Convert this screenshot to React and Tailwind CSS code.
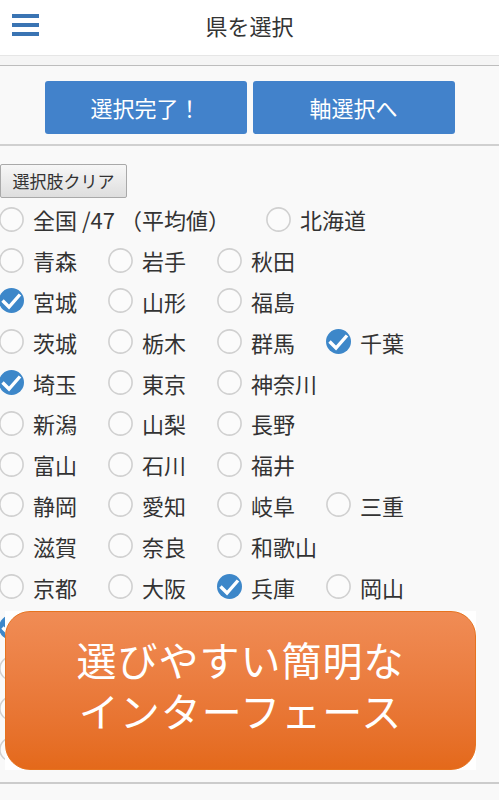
import React, { useState } from 'react';

const ROWS = [
  [{ name: '全国 /47 （平均値）', wide: true }, { name: '北海道' }],
  [{ name: '青森' }, { name: '岩手' }, { name: '秋田' }],
  [{ name: '宮城', on: true }, { name: '山形' }, { name: '福島' }],
  [{ name: '茨城' }, { name: '栃木' }, { name: '群馬' }, { name: '千葉', on: true }],
  [{ name: '埼玉', on: true }, { name: '東京' }, { name: '神奈川' }],
  [{ name: '新潟' }, { name: '山梨' }, { name: '長野' }],
  [{ name: '富山' }, { name: '石川' }, { name: '福井' }],
  [{ name: '静岡' }, { name: '愛知' }, { name: '岐阜' }, { name: '三重' }],
  [{ name: '滋賀' }, { name: '奈良' }, { name: '和歌山' }],
  [{ name: '京都' }, { name: '大阪' }, { name: '兵庫', on: true }, { name: '岡山' }],
  [{ name: '鳥取', on: true }, { name: '島根' }, { name: '広島' }, { name: '山口' }],
  [{ name: '徳島' }, { name: '香川' }, { name: '愛媛' }, { name: '高知' }],
  [{ name: '福岡' }, { name: '佐賀' }, { name: '長崎' }, { name: '熊本' }],
  [{ name: '大分' }, { name: '宮崎' }, { name: '鹿児島' }, { name: '沖縄' }],
];

function Radio({ checked }) {
  if (checked) {
    return (
      <svg width="25" height="25" viewBox="0 0 25 25" className="shrink-0">
        <circle cx="12.5" cy="12.5" r="12.5" fill="#3d87c9" />
        <polyline points="3.5,12.5 10,19 21,6.5" fill="none" stroke="#fff" strokeWidth="3.4" />
      </svg>
    );
  }
  return (
    <svg width="25" height="25" viewBox="0 0 25 25" className="shrink-0">
      <circle cx="12.5" cy="12.5" r="11.6" fill="#fbfbfb" stroke="#d0d0d0" strokeWidth="1.6" />
    </svg>
  );
}

export default function App() {
  const [rows, setRows] = useState(ROWS);

  const toggle = (ri, ci) => {
    setRows(rs => rs.map((r, i) => i !== ri ? r : r.map((it, j) => j === ci ? { ...it, on: !it.on } : it)));
  };

  const clearAll = () => setRows(rs => rs.map(r => r.map(it => ({ ...it, on: false }))));

  return (
    <div
      className="relative min-h-screen bg-[#f9f9f9] text-[#333]"
      style={{ fontFamily: '"Noto Sans CJK JP", "Noto Sans", sans-serif' }}
    >
      {/* header */}
      <div className="flex h-[56px] items-center bg-white px-3 pb-[5px] border-b border-[#e6e6e6]">
        <div className="flex w-[27px] flex-col gap-[5px]">
          <span className="block h-[4px] bg-[#3a74b3]" />
          <span className="block h-[4px] bg-[#3a74b3]" />
          <span className="block h-[4px] bg-[#3a74b3]" />
        </div>
        <h1 className="flex-1 text-center text-[22px] leading-none">県を選択</h1>
        <div className="w-[27px]" />
      </div>
      <div className="h-[10px] bg-[#f5f5f5] border-b border-[#bdbdbd]" />

      {/* actions */}
      <div className="flex justify-center gap-[6px] pt-[15px] pb-[10px] border-b-2 border-[#d0d0d0]">
        <button className="h-[53px] w-[202px] rounded-[3px] bg-[#4282cb] text-[22px] text-white">選択完了！</button>
        <button className="h-[53px] w-[202px] rounded-[3px] bg-[#4282cb] text-[22px] text-white">軸選択へ</button>
      </div>

      <button
        onClick={clearAll}
        className="mt-[18px] h-[34px] w-[127px] rounded-[2px] border border-[#a9a9a9] bg-gradient-to-b from-[#f7f7f7] to-[#dedede] text-[17px]"
      >
        選択肢クリア
      </button>

      {/* prefecture list */}
      <div className="ml-[-1px] mt-[1px] pb-[12px] border-b-2 border-[#cccccc]">
        {rows.map((row, ri) => (
          <div key={ri} className="flex h-[40.8px] items-center">
            {row.map((it, ci) => (
              <label
                key={it.name}
                onClick={() => toggle(ri, ci)}
                className={`flex shrink-0 cursor-pointer items-center gap-[9px] text-[22px] leading-none ${it.wide ? 'w-[267px]' : 'w-[109px]'}`}
              >
                <Radio checked={it.on} />
                <span className="whitespace-nowrap">{it.name}</span>
              </label>
            ))}
          </div>
        ))}
      </div>

      {/* promo overlay */}
      <div className="absolute left-[5px] top-[611px] h-[159px] w-[471px] bg-white">
        <div className="flex h-full w-full flex-col items-center justify-center rounded-[25px] border border-[#e6731f] bg-gradient-to-b from-[#f08c55] to-[#e4691a] pb-[12px] text-[40px] leading-[51px] tracking-[1px] text-white">
          <div>選びやすい簡明な</div>
          <div>インターフェース</div>
        </div>
      </div>
    </div>
  );
}
